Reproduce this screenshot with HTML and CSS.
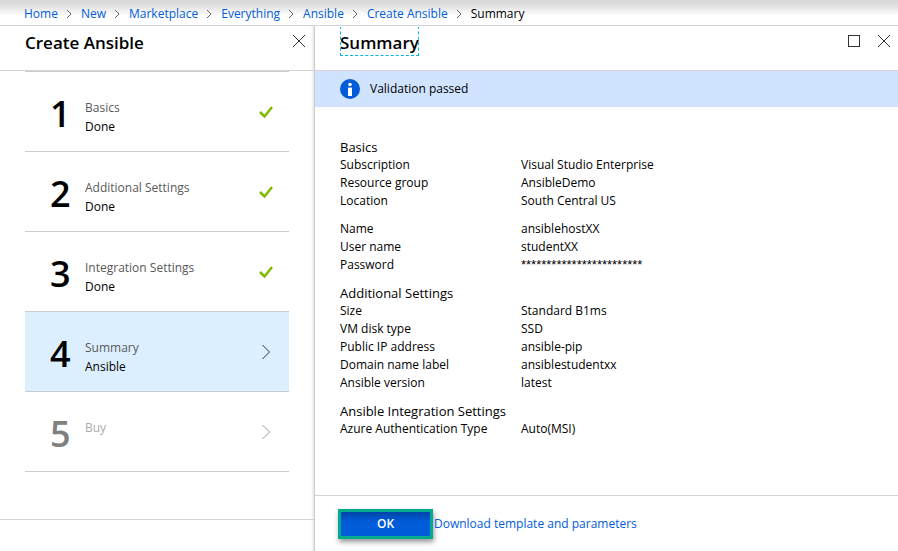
FILE: index.html
```html
<!DOCTYPE html>
<html lang="en">
<head>
<meta charset="utf-8">
<meta name="viewport" content="width=device-width, initial-scale=1">
<title>Create Ansible</title>
<link rel="stylesheet" href="styles.css">
</head>
<body>
<nav class="crumbs" aria-label="Breadcrumb">
  <a href="#">Home</a>
  <svg class="sep" viewBox="0 0 7 10"><path d="M1 1l4 4-4 4"/></svg>
  <a href="#">New</a>
  <svg class="sep" viewBox="0 0 7 10"><path d="M1 1l4 4-4 4"/></svg>
  <a href="#">Marketplace</a>
  <svg class="sep" viewBox="0 0 7 10"><path d="M1 1l4 4-4 4"/></svg>
  <a href="#">Everything</a>
  <svg class="sep" viewBox="0 0 7 10"><path d="M1 1l4 4-4 4"/></svg>
  <a href="#">Ansible</a>
  <svg class="sep" viewBox="0 0 7 10"><path d="M1 1l4 4-4 4"/></svg>
  <a href="#">Create Ansible</a>
  <svg class="sep" viewBox="0 0 7 10"><path d="M1 1l4 4-4 4"/></svg>
  <span>Summary</span>
</nav>
<main class="blades">
  <section class="blade wizard">
    <header class="blade-head">
      <h1 class="title">Create Ansible</h1>
      <div class="tools">
        <button class="tool" type="button" aria-label="Close"><svg viewBox="0 0 12 12"><path d="M0 0l12 12M12 0L0 12"/></svg></button>
      </div>
    </header>
    <div class="steps">
      <button class="step" type="button">
        <span class="num">1</span>
        <span class="label"><span class="name">Basics</span><span>Done</span></span>
        <svg class="check" viewBox="0 0 14 12"><path d="M1 6l4.5 4.5L13 1"/></svg>
      </button>
      <button class="step" type="button">
        <span class="num">2</span>
        <span class="label"><span class="name">Additional Settings</span><span>Done</span></span>
        <svg class="check" viewBox="0 0 14 12"><path d="M1 6l4.5 4.5L13 1"/></svg>
      </button>
      <button class="step" type="button">
        <span class="num">3</span>
        <span class="label"><span class="name">Integration Settings</span><span>Done</span></span>
        <svg class="check" viewBox="0 0 14 12"><path d="M1 6l4.5 4.5L13 1"/></svg>
      </button>
      <button class="step current" type="button">
        <span class="num">4</span>
        <span class="label"><span class="name">Summary</span><span>Ansible</span></span>
        <svg class="arrow" viewBox="0 0 14 14"><path d="M3.5 0l7 7-7 7"/></svg>
      </button>
      <button class="step" type="button" disabled>
        <span class="num">5</span>
        <span class="label"><span class="name">Buy</span></span>
        <svg class="arrow" viewBox="0 0 14 14"><path d="M3.5 0l7 7-7 7"/></svg>
      </button>
    </div>
    <footer class="wizard-foot"></footer>
  </section>
  <section class="blade summary">
    <header class="blade-head">
      <h2 class="title focused">Summary</h2>
      <div class="tools">
        <button class="tool" type="button" aria-label="Maximize"><svg viewBox="0 0 12 12"><rect x=".5" y=".5" width="11" height="11"/></svg></button>
        <button class="tool" type="button" aria-label="Close"><svg viewBox="0 0 12 12"><path d="M0 0l12 12M12 0L0 12"/></svg></button>
      </div>
    </header>
    <div class="banner" role="status">
      <svg class="info" viewBox="0 0 20 20"><circle cx="10" cy="10" r="10" fill="#015cda"/><circle cx="10" cy="5.5" r="1.8" fill="#fff"/><path d="M8 8.6h4V17H8z" fill="#fff"/></svg>
      <span>Validation passed</span>
    </div>
    <div class="details">
      <section class="group">
        <h3>Basics</h3>
        <dl>
          <dt>Subscription</dt><dd>Visual Studio Enterprise</dd>
          <dt>Resource group</dt><dd>AnsibleDemo</dd>
          <dt>Location</dt><dd>South Central US</dd>
        </dl>
      </section>
      <section class="group">
        <dl>
          <dt>Name</dt><dd>ansiblehostXX</dd>
          <dt>User name</dt><dd>studentXX</dd>
          <dt>Password</dt><dd class="masked">************************</dd>
        </dl>
      </section>
      <section class="group">
        <h3>Additional Settings</h3>
        <dl>
          <dt>Size</dt><dd>Standard B1ms</dd>
          <dt>VM disk type</dt><dd>SSD</dd>
          <dt>Public IP address</dt><dd>ansible-pip</dd>
          <dt>Domain name label</dt><dd>ansiblestudentxx</dd>
          <dt>Ansible version</dt><dd>latest</dd>
        </dl>
      </section>
      <section class="group">
        <h3>Ansible Integration Settings</h3>
        <dl>
          <dt>Azure Authentication Type</dt><dd>Auto(MSI)</dd>
        </dl>
      </section>
    </div>
    <footer class="actions">
      <button class="ok" type="button">OK</button>
      <a href="#">Download template and parameters</a>
    </footer>
  </section>
</main>
</body>
</html>
```

FILE: styles.css
```css
* { box-sizing: border-box; }

body {
  margin: 0;
  min-height: 100vh;
  display: flex;
  flex-direction: column;
  background: #fff;
  color: #000;
  font: 12px/18px "Segoe UI", "Open Sans", "Noto Sans", sans-serif;
}

h1, h2, h3, dl, dd { margin: 0; }
button { font: inherit; color: inherit; border: 0; background: none; padding: 0; }
a { color: #015cda; text-decoration: none; }
svg { display: block; flex: none; fill: none; }

.crumbs {
  display: flex;
  align-items: center;
  gap: 8px;
  height: 26px;
  padding: 2px 24px 0;
  border-bottom: 1px solid #d4d4d4;
  background: linear-gradient(#d8d8d8, #dcdcdc 4px, #fff 16px);
  white-space: nowrap;
}
.sep { width: 7px; height: 10px; stroke: #666; }

.blades { flex: 1; display: flex; }
.blade { display: flex; flex-direction: column; }
.wizard { width: 315px; border-right: 1px solid #ccc; box-shadow: inset -3px 0 3px -2px #ddd; }
.summary { flex: 1; min-width: 0; }

.blade-head {
  display: flex;
  justify-content: space-between;
  align-items: flex-start;
  height: 45px;
  padding: 0 8px 0 25px;
  border-bottom: 1px solid #d4d4d4;
}
.wizard .blade-head { padding-right: 9px; }
.title { font-size: 17px; line-height: 28px; font-weight: 600; padding-top: 3px; }
.focused { height: 30px; outline: 1px dashed #00b7e8; outline-offset: -1px; clip-path: inset(1px 0 0); }
.tools { display: flex; gap: 18px; padding-top: 9px; }
.tool svg { width: 12px; height: 12px; stroke: #333; }

.steps { flex: 1; padding: 0 25px; }
.step {
  display: flex;
  width: 100%;
  height: 80px;
  padding: 26px 16px 0 25px;
  border-bottom: 1px solid #ccc;
  text-align: left;
}
.step:first-child { height: 81px; border-top: 1px solid #ccc; }
.current { background: #dcefff; }
.num { width: 35px; font-size: 36px; line-height: 32px; font-weight: 600; }
.label { flex: 1; display: flex; flex-direction: column; line-height: 19px; }
.name { color: #595959; }
.check { width: 14px; height: 12px; margin-top: 8px; stroke: #7fba00; stroke-width: 2.5; }
.arrow { width: 14px; height: 14px; margin-top: 7px; stroke: #333; }
.step:disabled .num { color: #808080; }
.step:disabled .name { color: #acacac; }
.step:disabled .arrow { stroke: #999; }
.wizard-foot { height: 32px; border-top: 1px solid #d4d4d4; }

.banner {
  display: flex;
  align-items: center;
  gap: 10px;
  height: 36px;
  padding: 0 25px;
  background: #d0e3ff;
}
.info { width: 20px; height: 20px; }

.details { flex: 1; display: flex; flex-direction: column; gap: 10px; padding: 31px 25px 24px; }
.group h3 { font-size: 13px; line-height: 18px; font-weight: 400; }
.group dl { display: grid; grid-template-columns: 181px 1fr; }
.masked { font-family: "Liberation Sans", Arial, sans-serif; font-size: 13px; }

.actions {
  display: flex;
  align-items: center;
  height: 56px;
  padding: 0 23px;
  border-top: 1px solid #d4d4d4;
}
.ok {
  width: 95px;
  height: 30px;
  margin-right: 1px;
  border: 3px solid #00ab8e;
  background: linear-gradient(#0045a8, #015cda 10px);
  box-shadow: 1px 3px 5px #999;
  color: #fff;
  font-weight: 600;
}
```
